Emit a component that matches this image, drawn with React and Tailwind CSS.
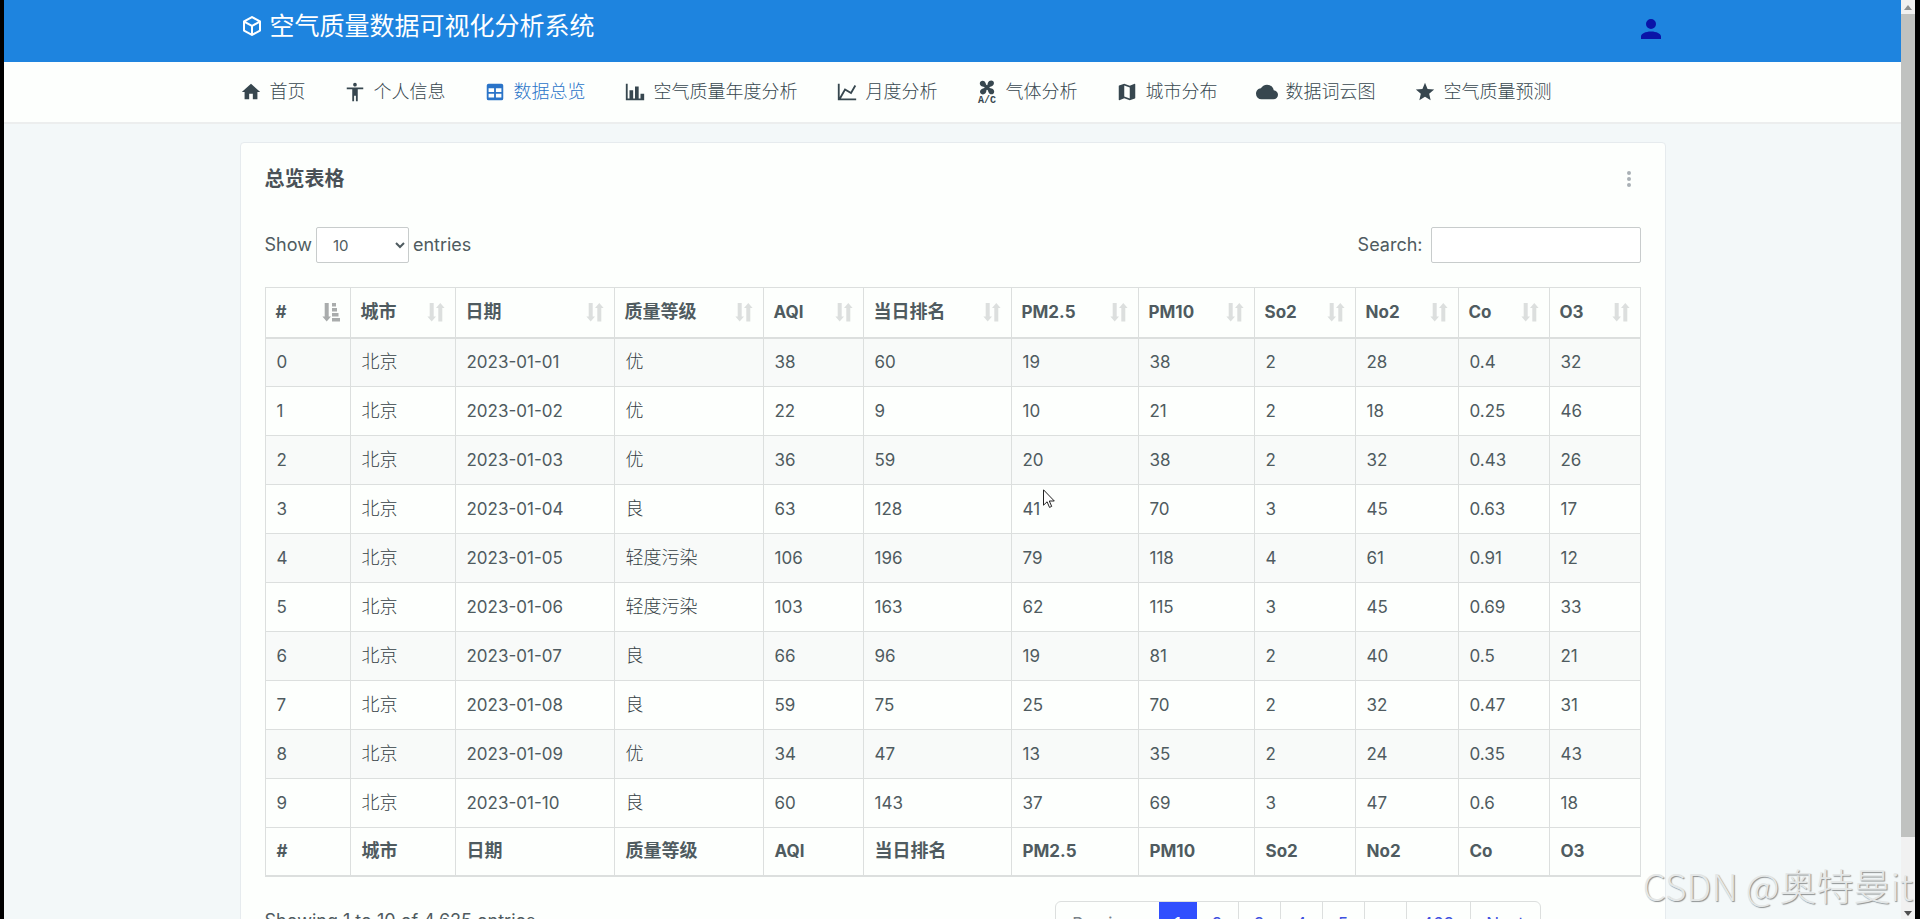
import React, { useState } from "react";

const icons = {
  cube: "M21,16.5C21,16.88 20.79,17.21 20.47,17.38L12.57,21.82C12.41,21.94 12.21,22 12,22C11.79,22 11.59,21.94 11.43,21.82L3.53,17.38C3.21,17.21 3,16.88 3,16.5V7.5C3,7.12 3.21,6.79 3.53,6.62L11.43,2.18C11.59,2.06 11.79,2 12,2C12.21,2 12.41,2.06 12.57,2.18L20.47,6.62C20.79,6.79 21,7.12 21,7.5V16.5M12,4.15L6.04,7.5L12,10.85L17.96,7.5L12,4.15M5,15.91L11,19.29V12.58L5,9.21V15.91M19,15.91V9.21L13,12.58V19.29L19,15.91Z",
  home: "M10,20V14H14V20H19V12H22L12,3L2,12H5V20H10Z",
  human: "M21,9H15V22H13V16H11V22H9V9H3V7H21V9M12,2A2,2 0 0,1 14,4A2,2 0 0,1 12,6C10.89,6 10,5.1 10,4C10,2.89 10.89,2 12,2Z",
  table: "M5,3H19A2,2 0 0,1 21,5V19A2,2 0 0,1 19,21H5A2,2 0 0,1 3,19V5A2,2 0 0,1 5,3M5,8V12H11V8H5M13,8V12H19V8H13M5,14V18H11V14H5M13,14V18H19V14H13Z",
  chartBar: "M22,21H2V3H4V19H6V10H10V19H12V6H16V19H18V14H22V21Z",
  chartLine: "M16,11.78L20.24,4.45L21.97,5.45L16.74,14.5L10.23,10.75L5.46,19H22V21H2V3H4V17.54L9.5,8L16,11.78Z",
  map: "M20.5,3L20.34,3.03L15,5.1L9,3L3.36,4.9C3.15,4.97 3,5.15 3,5.38V20.5A0.5,0.5 0 0,0 3.5,21L3.66,20.97L9,18.9L15,21L20.64,19.1C20.85,19.03 21,18.85 21,18.62V3.5A0.5,0.5 0 0,0 20.5,3M15,19L9,16.89V5L15,7.11V19Z",
  cloud: "M19.35,10.03C18.67,6.59 15.64,4 12,4C9.11,4 6.6,5.64 5.35,8.03C2.34,8.36 0,10.9 0,14A6,6 0 0,0 6,20H19A5,5 0 0,0 24,15C24,12.36 21.95,10.22 19.35,10.03Z",
  star: "M12,17.27L18.18,21L16.54,13.97L22,9.24L14.81,8.62L12,2L9.19,8.62L2,9.24L7.45,13.97L5.82,21L12,17.27Z",
  account: "M12,4A4,4 0 0,1 16,8A4,4 0 0,1 12,12A4,4 0 0,1 8,8A4,4 0 0,1 12,4M12,14C16.42,14 20,15.79 20,18V20H4V18C4,15.79 7.58,14 12,14Z",
  dots: "M12,16A2,2 0 0,1 14,18A2,2 0 0,1 12,20A2,2 0 0,1 10,18A2,2 0 0,1 12,16M12,10A2,2 0 0,1 14,12A2,2 0 0,1 12,14A2,2 0 0,1 10,12A2,2 0 0,1 12,10M12,4A2,2 0 0,1 14,6A2,2 0 0,1 12,8A2,2 0 0,1 10,6A2,2 0 0,1 12,4Z",
};

const Icon = ({ name, className }) => (
  <svg viewBox="0 0 24 24" fill="currentColor" className={className} aria-hidden="true">
    <path d={icons[name]} />
  </svg>
);

const AirConditioner = ({ className }) => (
  <svg viewBox="0 0 22 28" fill="currentColor" className={className} aria-hidden="true">
    <circle cx="11" cy="9.500" r="2.500" />
    <path d="M10 9C7.500 9.200 3.800 8.500 3.800 5.300 3.800 2.800 7 1.800 8.700 3.600 10 5 9.800 7.200 11.500 8.500z" />
    <path d="M11.500 8.500C11.300 6 12 2.600 15.200 2.600c2.700 0 3.700 3.200 1.700 4.900C15.400 8.800 13.300 8.600 12 10.300z" />
    <path d="M12 10c2.500-.2 6.200.5 6.200 3.700 0 2.500-3.200 3.500-4.900 1.700C12 14 12.200 11.800 10.500 10.500z" />
    <path d="M10.500 10.500c.2 2.500-.5 5.900-3.700 5.900-2.700 0-3.700-3.200-1.700-4.900C6.600 10.200 8.700 10.400 10 8.700z" />
    <text x="11" y="25" textAnchor="middle" fontSize="10" fontWeight="700" fontFamily="Liberation Mono, monospace">A/C</text>
  </svg>
);

const SortIcon = ({ active }) =>
  active ? (
    <svg viewBox="0 0 18 20" fill="currentColor" className="h-5 w-[18px] text-[#a9acac]" aria-hidden="true">
      <path d="M2.700 1h4v13.500H9L4.700 19.500.4 14.500h2.300zM10 1h4v3.500h-4zM10 6h5v3.500h-5zM10 11h6.500v3.500H10zM10 16h8v3.500h-8z" />
    </svg>
  ) : (
    <svg viewBox="0 0 18 20" fill="currentColor" className="h-5 w-[18px] text-[#dcdfde]" aria-hidden="true">
      <path d="M2.700 1h4v13.500H9L4.700 19.500.4 14.500h2.300zM11.300 19.500V6H9l4.300-5 4.300 5h-2.300v13.500z" />
    </svg>
  );

const navItems = [
  { icon: "home", label: "首页" },
  { icon: "human", label: "个人信息" },
  { icon: "table", label: "数据总览", active: true },
  { icon: "chartBar", label: "空气质量年度分析" },
  { icon: "chartLine", label: "月度分析" },
  { icon: "ac", label: "气体分析" },
  { icon: "map", label: "城市分布" },
  { icon: "cloud", label: "数据词云图" },
  { icon: "star", label: "空气质量预测" },
];

const columns = [
  { title: "#", width: "w-[85px]" },
  { title: "城市", width: "w-[105px]" },
  { title: "日期", width: "w-[159px]" },
  { title: "质量等级", width: "w-[149px]" },
  { title: "AQI", width: "w-[100px]" },
  { title: "当日排名", width: "w-[148px]" },
  { title: "PM2.5", width: "w-[127px]" },
  { title: "PM10", width: "w-[116px]" },
  { title: "So2", width: "w-[101px]" },
  { title: "No2", width: "w-[103px]" },
  { title: "Co", width: "w-[91px]" },
  { title: "O3", width: "w-[91px]" },
];

const rows = [
  [0, "北京", "2023-01-01", "优", 38, 60, 19, 38, 2, 28, 0.4, 32],
  [1, "北京", "2023-01-02", "优", 22, 9, 10, 21, 2, 18, 0.25, 46],
  [2, "北京", "2023-01-03", "优", 36, 59, 20, 38, 2, 32, 0.43, 26],
  [3, "北京", "2023-01-04", "良", 63, 128, 41, 70, 3, 45, 0.63, 17],
  [4, "北京", "2023-01-05", "轻度污染", 106, 196, 79, 118, 4, 61, 0.91, 12],
  [5, "北京", "2023-01-06", "轻度污染", 103, 163, 62, 115, 3, 45, 0.69, 33],
  [6, "北京", "2023-01-07", "良", 66, 96, 19, 81, 2, 40, 0.5, 21],
  [7, "北京", "2023-01-08", "良", 59, 75, 25, 70, 2, 32, 0.47, 31],
  [8, "北京", "2023-01-09", "优", 34, 47, 13, 35, 2, 24, 0.35, 43],
  [9, "北京", "2023-01-10", "良", 60, 143, 37, 69, 3, 47, 0.6, 18],
];

const isChinese = (value) => /[\u4e00-\u9fa5]/.test(String(value));

const Header = () => (
  <header className="h-[62px] bg-[#1e84df]">
    <div className="mx-auto flex w-[94%] max-w-[1426px] items-start justify-between">
      <a href="#" className="flex items-center gap-1.5 pt-2 text-white">
        <Icon name="cube" className="size-6" />
        <span className="text-[25px] leading-9">空气质量数据可视化分析系统</span>
      </a>
      <button type="button" aria-label="个人中心" className="mt-3.5 text-[#0a14a8]">
        <Icon name="account" className="size-[30px]" />
      </button>
    </div>
  </header>
);

const Nav = () => (
  <nav className="border-b-2 border-[#eceeee] bg-[#fdfffd]">
    <ul className="mx-auto flex h-[60px] w-[94%] max-w-[1426px] items-center gap-[38px]">
      {navItems.map((item) => (
        <li key={item.label}>
          <a
            href="#"
            className={`flex items-center gap-2 whitespace-nowrap text-lg font-light ${
              item.active ? "text-[#2a74c8]" : "text-[#37474f]"
            }`}
          >
            {item.icon === "ac" ? (
              <AirConditioner className="h-7 w-[22px]" />
            ) : (
              <Icon name={item.icon} className="size-[22px]" />
            )}
            {item.label}
          </a>
        </li>
      ))}
    </ul>
  </nav>
);

const DataTable = () => (
  <table className="w-full table-fixed border-collapse border border-[#dcdfde] text-left">
    <colgroup>
      {columns.map((col) => (
        <col key={col.title} className={col.width} />
      ))}
    </colgroup>
    <thead>
      <tr className="h-[50px] border-b-2 border-[#dcdfde]">
        {columns.map((col, i) => (
          <th key={col.title} scope="col" className="border-x border-[#dcdfde] px-2.5 py-0">
            <div className="flex items-center justify-between">
              <span className={isChinese(col.title) ? "text-lg leading-6" : "text-[17px] leading-6"}>{col.title}</span>
              <SortIcon active={i === 0} />
            </div>
          </th>
        ))}
      </tr>
    </thead>
    <tbody>
      {rows.map((row) => (
        <tr key={row[0]} className="h-[49px] odd:bg-[#f8faf9]">
          {row.map((value, i) => (
            <td
              key={i}
              className={`border border-[#dcdfde] px-[11px] py-0 ${
                isChinese(value) ? "text-lg leading-6 font-light text-[#353f45]" : "text-[17px] leading-6"
              }`}
            >
              {value}
            </td>
          ))}
        </tr>
      ))}
    </tbody>
    <tfoot>
      <tr className="h-12 border-b-2 border-[#dcdfde]">
        {columns.map((col) => (
          <th
            key={col.title}
            className={`border-x border-[#dcdfde] px-[11px] py-0 ${
              isChinese(col.title) ? "text-lg leading-6" : "text-[17px] leading-6"
            }`}
          >
            {col.title}
          </th>
        ))}
      </tr>
    </tfoot>
  </table>
);

const Pagination = () => {
  const pages = ["2", "3", "4", "5", "…", "463"];
  return (
    <div className="flex h-[46px] overflow-hidden rounded-md border border-[#dcdfde] text-[17px] leading-6 text-[#3f51e0]">
      <button type="button" disabled className="w-[103px] text-[#7a8288]">Previous</button>
      <button type="button" className="w-[38px] bg-[#304ffe] text-white">1</button>
      {pages.map((page) => (
        <button
          key={page}
          type="button"
          className={`border-r border-[#dcdfde] ${page === "463" ? "w-16" : "w-[42px]"}`}
        >
          {page}
        </button>
      ))}
      <button type="button" className="w-[69px]">Next</button>
    </div>
  );
};

const App = () => {
  const [pageSize, setPageSize] = useState("10");
  const [search, setSearch] = useState("");

  return (
    <div className="relative flex h-screen overflow-hidden border-l-4 border-r-[5px] border-black bg-[#f3f8f9] font-['Inter','Noto_Sans_CJK_SC',sans-serif] text-[#4f5b60]">
      <div className="min-w-0 flex-1">
        <Header />
        <Nav />
        <main className="mx-auto mt-[18px] w-[94%] max-w-[1426px] rounded border border-[#e6ebee] bg-[#fdfffd] px-6 pt-6 pb-8">
          <div className="flex items-center justify-between">
            <h4 className="text-xl leading-6 font-bold text-[#4a5157]">总览表格</h4>
            <button type="button" aria-label="更多" className="text-[#a9b0b5]">
              <Icon name="dots" className="size-6" />
            </button>
          </div>

          <div className="mt-9 mb-6 flex items-center justify-between text-lg leading-6">
            <label className="flex items-center gap-1">
              Show
              <select
                value={pageSize}
                onChange={(e) => setPageSize(e.target.value)}
                className="h-9 w-[93px] rounded-xs border border-[#c8cccc] bg-white px-3 text-[15px]"
              >
                <option>10</option>
                <option>25</option>
                <option>50</option>
                <option>100</option>
              </select>
              entries
            </label>
            <label className="flex items-center gap-2">
              Search:
              <input
                type="search"
                value={search}
                onChange={(e) => setSearch(e.target.value)}
                className="h-9 w-[210px] rounded-xs border border-[#c8cccc] bg-white px-3 text-[15px]"
              />
            </label>
          </div>

          <DataTable />

          <div className="mt-6 flex items-start justify-between pr-[100px]">
            <p className="pt-2 text-lg leading-6">Showing 1 to 10 of 4,625 entries</p>
            <Pagination />
          </div>
        </main>
      </div>

      {/* Scrollbar */}
      <div className="flex w-3.5 shrink-0 flex-col items-center bg-[#f1f1f1]">
        <span className="flex h-3.5 items-center text-[#8f9191]">
          <svg viewBox="0 0 8 5" className="h-[5px] w-2" fill="currentColor"><path d="M4 0l4 5H0z" /></svg>
        </span>
        <span className="w-full flex-[826] bg-[#c0c2c0]" />
        <span className="flex flex-[79] items-end pb-[3px] text-[#505050]">
          <svg viewBox="0 0 8 5" className="h-[5px] w-2" fill="currentColor"><path d="M4 5L0 0h8z" /></svg>
        </span>
      </div>

      {/* Mouse pointer */}
      <svg viewBox="0 0 12 19" className="absolute top-[489px] left-[1039px] h-[19px] w-3" fill="#fff" stroke="#222" aria-hidden="true">
        <path d="M.5 .8v15.400l3.600-3.400 2.400 5.600 2.200-1-2.400-5.400h5z" />
      </svg>

      {/* Watermark */}
      <div className="pointer-events-none absolute right-0.5 bottom-2.5 whitespace-nowrap text-[37px] leading-[48px] font-light text-[#e4e7e7] font-['Noto_Sans_CJK_SC',sans-serif] [text-shadow:1px_1px_1px_#8d9192]">
        CSDN @奥特曼it
      </div>
    </div>
  );
};

export default App;
